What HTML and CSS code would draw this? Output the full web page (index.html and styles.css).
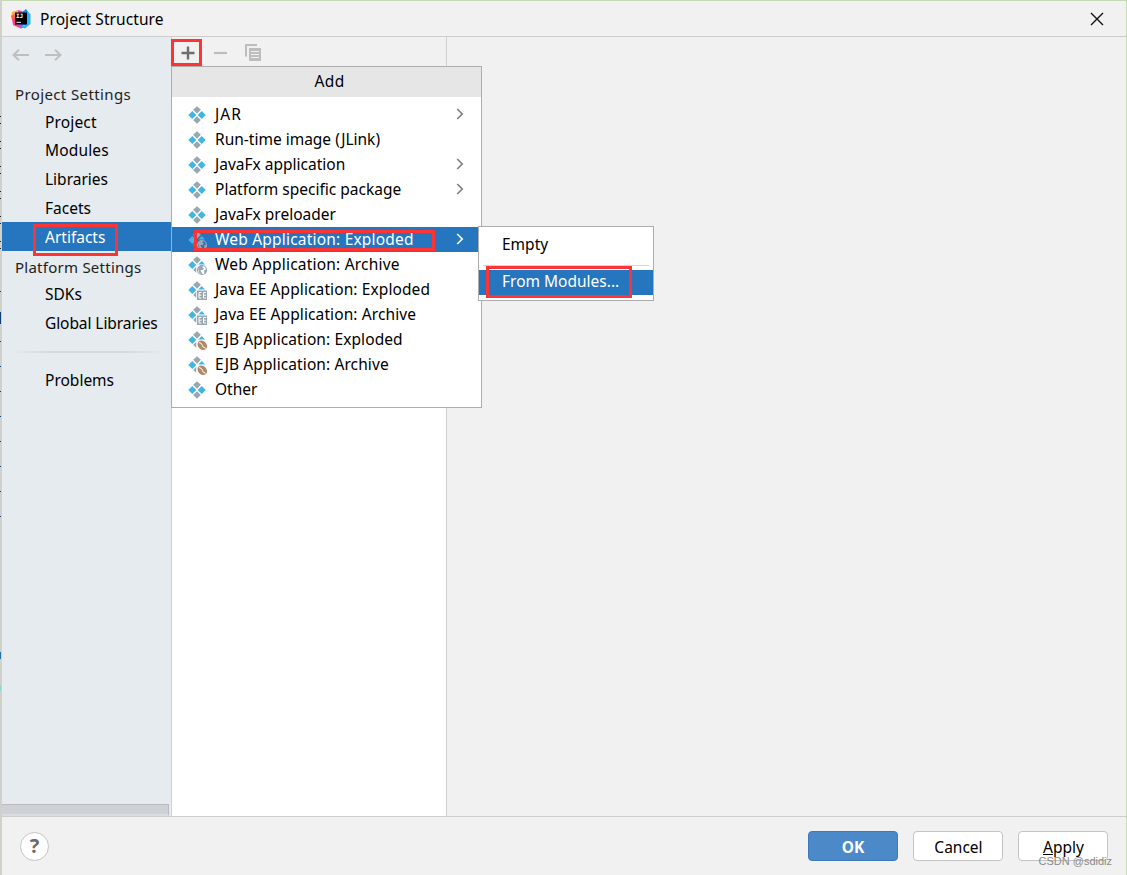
FILE: index.html
```html
<!DOCTYPE html>
<html lang="en">
<head>
    <meta charset="UTF-8">
    <title>Project Structure</title>
    <link rel="stylesheet" href="styles.css">
</head>
<body>
    <!-- shared icons -->
    <svg class="defs" width="0" height="0">
        <symbol id="artifact" viewBox="0 0 18 18">
            <path fill="#9aa7b0" d="M9 .3l3.900 3.500L9 7.700 5.100 3.800zM9 10.300l3.900 3.700L9 17.700l-3.900-3.700z"/>
            <path fill="#40b6e0" d="M4.300 5L8.300 9l-4 4L.3 9zM13.700 5l4 4-4 4-4-4z"/>
        </symbol>
        <symbol id="artifact-cut" viewBox="0 0 18 18">
            <path fill="#9aa7b0" d="M9 .3l3.900 3.500L9 7.700 5.100 3.800zM8.200 10.800v6L5.200 14z"/>
            <path fill="#40b6e0" d="M4.300 5L8.300 9l-4 4L.3 9zM13.700 5l3.300 3.400H10.400z"/>
        </symbol>
        <symbol id="web" viewBox="0 0 20 20">
            <use href="#artifact-cut" width="18" height="18"/>
            <circle cx="14" cy="14" r="4.500" fill="none" stroke="#9aa7b0" stroke-width="1.200"/>
            <path fill="#9aa7b0" d="M10 11.500l2.500-2 2.500.3-.5 1.700 1.500 1.200-1.500 1.300h-2l.5 1.500 1 1.500v1.500l-2.500-1.500-1-2.500zM16 14.500l2.500-1v2.500l-2 2z"/>
        </symbol>
        <symbol id="ee" viewBox="0 0 20 20">
            <use href="#artifact-cut" width="18" height="18"/>
            <path fill="#9aa7b0" d="M9 9.500h10v9.500H9z"/>
            <path fill="none" stroke="#fff" d="M13.500 11.500H11v5.500h2.500M11 14.200h2.500M18 11.500h-2.500v5.500H18M15.500 14.200H18"/>
        </symbol>
        <symbol id="ejb" viewBox="0 0 20 20">
            <use href="#artifact-cut" width="18" height="18"/>
            <ellipse cx="14.300" cy="14.300" rx="5.300" ry="4.200" transform="rotate(45 14.300 14.300)" fill="#b08b68"/>
            <path fill="none" stroke="#fff" d="M11 11.500q3 .5 3.300 2.800t3.400 3"/>
        </symbol>
        <symbol id="arrow" viewBox="0 0 8 12">
            <path fill="none" stroke="currentColor" stroke-width="1.700" d="M1.200 1l5 5-5 5"/>
        </symbol>
    </svg>

    <div class="behind">
        <i class="m1"></i><i class="m2"></i><i class="m3"></i><i class="m4"></i><i class="m5"></i>
    </div>

    <div class="window">
        <header class="titlebar">
            <svg class="logo" width="20" height="20" viewBox="0 0 20 20">
                <path fill="#fdb04a" d="M1 3l6-2 3 4-5 6-5-3z"/>
                <path fill="#fc6a3d" d="M0 7l5-3v8l-4-1z"/>
                <path fill="#fe3a8c" d="M1 10l4-1 2 6 5 3-2 1.500L2 16z"/>
                <path fill="#a25be8" d="M7 15h5l1 3-3 1.500z"/>
                <path fill="#e8489c" d="M7 1l4 1 1 3H7z"/>
                <path fill="#1b8af8" d="M11 3l4-3 3 4v8l-2 4H11z"/>
                <path fill="#2bb8f7" d="M16 3l3.500 2v10L14 19.500l-4-1.500 6-3z"/>
                <path d="M4 3.500h12v12H4z"/>
                <text x="5" y="9.300">IJ</text>
                <path fill="#fff" d="M5.500 12.800h4.500v1H5.500z"/>
            </svg>
            <span class="title">Project Structure</span>
            <svg class="close" width="14" height="14" viewBox="0 0 14 14"><path d="M1 1l12 12M13 1L1 13" fill="none" stroke="#111" stroke-width="1.400"/></svg>
        </header>

        <main class="content">
            <nav class="sidebar">
                <div class="history">
                    <svg width="17" height="12" viewBox="0 0 17 12"><path d="M17 6H1.500M7 .8L1.500 6 7 11.200"/></svg>
                    <svg width="17" height="12" viewBox="0 0 17 12"><path d="M0 6h15.500M10 .8L15.500 6 10 11.200"/></svg>
                </div>
                <h2>Project Settings</h2>
                <ul>
                    <li class="project">Project</li>
                    <li class="modules">Modules</li>
                    <li class="libraries">Libraries</li>
                    <li class="facets">Facets</li>
                    <li class="selected">Artifacts<b class="mark mark-artifacts"></b></li>
                </ul>
                <h2 class="platform">Platform Settings</h2>
                <ul>
                    <li class="sdks">SDKs</li>
                    <li class="global">Global Libraries</li>
                </ul>
                <hr>
                <ul>
                    <li class="problems">Problems</li>
                </ul>
                <div class="scrollbar"></div>
            </nav>

            <section class="list">
                <div class="toolbar">
                    <div class="add">
                        <svg width="14" height="14" viewBox="0 0 14 14"><path d="M7 .5v13M.5 7h13" stroke="#6e6e6e" stroke-width="2.400"/></svg>
                    </div>
                    <svg class="remove" width="13" height="14" viewBox="0 0 13 14"><path d="M0 7h13" stroke="#bdbdbd" stroke-width="2.200"/></svg>
                    <svg class="copy" width="16" height="17" viewBox="0 0 16 17">
                        <path d="M1 12.500V1h11" fill="none" stroke="#bdbdbd" stroke-width="2"/>
                        <path fill="#bdbdbd" d="M4 4h12v13H4z"/>
                        <path stroke="#f1f1f1" stroke-width="1.200" d="M6 7.500h8M6 10.500h8M6 13.500h8"/>
                    </svg>
                </div>
                <div class="items"></div>

                <div class="menu">
                    <div class="menu-title">Add</div>
                    <ul>
                        <li><svg class="icon"><use href="#artifact"/></svg><span class="jar">JAR</span><svg class="arrow"><use href="#arrow"/></svg></li>
                        <li><svg class="icon"><use href="#artifact"/></svg><span>Run-time image (JLink)</span></li>
                        <li><svg class="icon"><use href="#artifact"/></svg><span>JavaFx application</span><svg class="arrow"><use href="#arrow"/></svg></li>
                        <li><svg class="icon"><use href="#artifact"/></svg><span>Platform specific package</span><svg class="arrow"><use href="#arrow"/></svg></li>
                        <li><svg class="icon"><use href="#artifact"/></svg><span>JavaFx preloader</span></li>
                        <li class="active"><svg class="icon big"><use href="#web"/></svg><span class="web">Web Application: Exploded</span><svg class="arrow"><use href="#arrow"/></svg><b class="mark mark-web"></b></li>
                        <li><svg class="icon big"><use href="#web"/></svg><span class="web">Web Application: Archive</span></li>
                        <li><svg class="icon big"><use href="#ee"/></svg><span class="wide">Java EE Application: Exploded</span></li>
                        <li><svg class="icon big"><use href="#ee"/></svg><span class="wide">Java EE Application: Archive</span></li>
                        <li><svg class="icon big"><use href="#ejb"/></svg><span class="wide">EJB Application: Exploded</span></li>
                        <li><svg class="icon big"><use href="#ejb"/></svg><span class="wide">EJB Application: Archive</span></li>
                        <li><svg class="icon"><use href="#artifact"/></svg><span>Other</span></li>
                    </ul>
                    <div class="submenu">
                        <div class="row">Empty</div>
                        <hr>
                        <div class="row active">From Modules...<b class="mark mark-modules"></b></div>
                    </div>
                </div>
            </section>

            <section class="details"></section>
        </main>

        <footer class="footer">
            <button class="help">?</button>
            <div class="buttons">
                <button class="ok">OK</button>
                <button>Cancel</button>
                <button><u>A</u>pply</button>
            </div>
            <span class="watermark">CSDN @sdidiz</span>
        </footer>
    </div>
</body>
</html>
```
FILE: styles.css
```css
* {
    box-sizing: border-box;
}
body {
    margin: 0;
    width: 1127px;
    height: 875px;
    display: flex;
    overflow: hidden;
    font-family: "Noto Sans", sans-serif;
    font-size: 15.5px;
    color: #000;
    background: #f1f1f1;
}
ul {
    list-style: none;
    margin: 0;
    padding: 0;
}
.defs {
    position: absolute;
}

/* sliver of the editor left of the dialog */
.behind {
    position: relative;
    width: 2px;
    background: #d0d1c9;
}
.behind i {
    position: absolute;
    left: 0;
    width: 1px;
}
.m1 {
    top: 116px;
    height: 134px;
    background: repeating-linear-gradient(#222 0 1px, transparent 1px 7px, #222 7px 8px, transparent 8px 25px);
}
.m2 {
    top: 291px;
    height: 226px;
    background: repeating-linear-gradient(#123c80 0 1px, transparent 1px 25px);
}
.m3 {
    top: 312px;
    height: 12px;
    background: #123c80;
}
.m4 {
    top: 652px;
    height: 7px;
    background: #2670b8;
}
.m5 {
    top: 685px;
    height: 6px;
    background: #8fd8d0;
}

.window {
    flex: 1;
    display: flex;
    flex-direction: column;
    border-top: 1px solid #c5dbb2;
    border-right: 1px solid #c5dbb2;
}
.titlebar {
    height: 36px;
    display: flex;
    align-items: center;
    padding: 0 22px 0 9px;
    border-bottom: 1px solid #cdcdcd;
}
.logo text {
    font: bold 6px "DejaVu Sans Mono", monospace;
    fill: #fff;
}
.title {
    margin-left: 9px;
    padding-top: 1px;
    letter-spacing: 0.08px;
}
.close {
    margin-left: auto;
}

.content {
    flex: 1;
    display: flex;
}
.sidebar {
    width: 170px;
    display: flex;
    flex-direction: column;
    background: #e5ebef;
    border-right: 1px solid #d0d0d0;
}
.history {
    height: 42px;
    display: flex;
    gap: 16px;
    padding: 12px 0 0 10px;
}
.history path {
    fill: none;
    stroke: #bfbfbf;
    stroke-width: 2;
}
.sidebar h2 {
    height: 29px;
    margin: 0;
    padding-left: 13px;
    font-size: 15px;
    font-weight: normal;
    line-height: 31px;
    letter-spacing: 0.38px;
    color: #222;
    white-space: nowrap;
}
.sidebar li {
    position: relative;
    height: 29px;
    padding-left: 43px;
    line-height: 31px;
    white-space: nowrap;
}
.sidebar .project,
.sidebar .modules,
.sidebar .sdks {
    height: 28px;
    line-height: 29px;
}
.sidebar .project,
.sidebar .modules {
    letter-spacing: 0.15px;
}
.sidebar .global {
    letter-spacing: -0.08px;
}
.sidebar .problems {
    line-height: 29px;
}
.sidebar .selected {
    color: #fff;
    background: #2675bf;
}
.sidebar .platform {
    line-height: 32px;
    letter-spacing: 0.25px;
}
.sidebar hr {
    width: 150px;
    height: 2px;
    margin: 14px 0 13px 11px;
    border: 0;
    background: linear-gradient(90deg, transparent, #d5d9dc 25%, #d5d9dc 75%, transparent);
}
.scrollbar {
    width: 167px;
    height: 12px;
    margin-top: auto;
    background: #ced1d6;
    border: 1px solid #b9bbbe;
    border-width: 1px 1px 2px 0;
    border-bottom-color: #d9dde0;
}

.list {
    position: relative;
    width: 275px;
    display: flex;
    flex-direction: column;
    border-right: 1px solid #d0d0d0;
}
.toolbar {
    height: 30px;
    display: flex;
    align-items: center;
}
.add {
    width: 31px;
    height: 27px;
    margin-left: -1px;
    display: flex;
    align-items: center;
    justify-content: center;
    padding: 1px 0 0 2px;
    border: 3px solid #fc3434;
}
.remove {
    margin: 2px 0 0 12px;
}
.copy {
    margin-left: 18px;
}
.items {
    flex: 1;
    background: #fff;
}
.details {
    flex: 1;
}

.menu {
    position: absolute;
    z-index: 2;
    left: -1px;
    top: 29px;
    width: 311px;
    height: 342px;
    background: #fff;
    border: 1px solid #adadad;
}
.menu-title {
    height: 30px;
    margin-bottom: 5px;
    padding-left: 6px;
    line-height: 29px;
    letter-spacing: 0.4px;
    text-align: center;
    background: #e6e6e6;
}
.menu li {
    position: relative;
    height: 25px;
    display: flex;
    align-items: center;
    padding: 0 13px 0 16px;
    white-space: nowrap;
}
.menu li span {
    line-height: 24px;
    padding-bottom: 1px;
}
.menu .jar {
    letter-spacing: 1px;
}
.menu .web {
    letter-spacing: 0.2px;
}
.menu .wide {
    letter-spacing: 0.1px;
}
.menu .active {
    color: #fff;
    background: #2675bf;
}
.icon {
    width: 18px;
    height: 18px;
    margin-right: 9px;
}
.icon.big {
    width: 20px;
    height: 20px;
    margin-right: 7px;
    margin-top: 2px;
}
.arrow {
    width: 8px;
    height: 12px;
    margin: 0 4px 2px auto;
    color: #7f7f7f;
}
.active .arrow {
    color: #fff;
}

.submenu {
    position: absolute;
    left: 306px;
    top: 159px;
    width: 176px;
    height: 75px;
    padding-top: 5px;
    background: #fff;
    border: 1px solid #adadad;
}
.submenu .row {
    position: relative;
    height: 25px;
    padding-left: 23px;
    line-height: 24px;
}
.submenu .active {
    line-height: 23px;
}
.submenu hr {
    height: 1px;
    margin: 8px 4px 4px;
    border: 0;
    background: #d4d4d4;
}

/* red highlight frames */
.mark {
    position: absolute;
    border: 3px solid #fc3434;
}
.mark-artifacts {
    left: 31px;
    top: 2px;
    width: 85px;
    height: 32px;
}
.mark-web {
    left: 22px;
    top: 3px;
    width: 241px;
    height: 21px;
}
.mark-modules {
    left: 7px;
    top: -4px;
    width: 146px;
    height: 32px;
}

.footer {
    position: relative;
    height: 59px;
    display: flex;
    align-items: center;
    justify-content: space-between;
    padding: 0 18px;
    border-top: 1px solid #cdcdcd;
}
.footer button {
    width: 90px;
    height: 30px;
    padding: 2px 0 0 1px;
    font: inherit;
    line-height: 26px;
    color: #000;
    background: #fff;
    border: 1px solid #c4c4c4;
    border-radius: 4px;
}
.footer .ok {
    padding-left: 0;
    font-weight: bold;
    color: #fff;
    background: #4b89c8;
    border-color: #3e78b8;
}
.footer .help {
    width: 29px;
    height: 29px;
    padding: 0;
    font: bold 20px/26px "Noto Sans", sans-serif;
    color: #6b6b6b;
    border-radius: 50%;
}
.buttons {
    display: flex;
    gap: 15px;
}
.watermark {
    position: absolute;
    right: 14px;
    bottom: 7px;
    font: 11px/14px "Liberation Sans", sans-serif;
    color: #8a8a8a;
}
```
